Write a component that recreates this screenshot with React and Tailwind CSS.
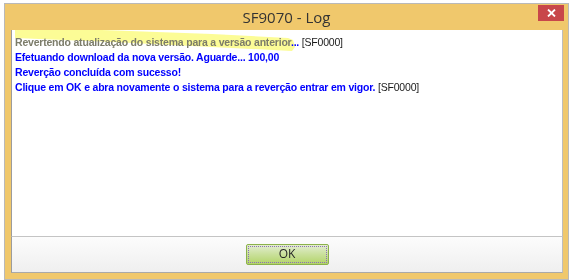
const lines = [
  { parts: [
    { t: "Revertendo atualização do sistema para a versão anterior", c: "text-[#7c7c6a]" },
    { t: "...", c: "text-[#0000ff]" },
    { t: " [SF0000]", c: "text-[#1a1a1a] font-normal" },
  ] },
  { parts: [{ t: "Efetuando download da nova versão. Aguarde... 100,00", c: "text-[#0000ff]" }] },
  { parts: [{ t: "Reverção concluída com sucesso!", c: "text-[#0000ff]" }] },
  { parts: [
    { t: "Clique em OK e abra novamente o sistema para a reverção entrar em vigor.", c: "text-[#0000ff]" },
    { t: " [SF0000]", c: "text-[#1a1a1a] font-normal" },
  ] },
];

export default function App() {
  return (
    <div className="w-[572px] h-[280px] bg-white pl-[4px] pt-[3px] overflow-hidden">
      <div className="w-[565px] h-[277px] border border-[#b9b9b9] bg-[#f0c86c] flex flex-col">
        {/* title bar */}
        <div className="relative h-[26px] shrink-0 flex items-center justify-center">
          <span className="text-[15px] text-[#333] font-['Open_Sans',sans-serif] leading-none mt-[1px]">SF9070 - Log</span>
          <div className="absolute right-[4px] top-[1px] w-[26px] h-[16px] bg-[#c8474a] flex items-center justify-center">
            <svg width="9" height="8" viewBox="0 0 9 8">
              <path d="M1 0.5 L8 7.5 M8 0.5 L1 7.5" stroke="white" strokeWidth="1.8" />
            </svg>
          </div>
        </div>

        {/* client */}
        <div className="ml-[6px] mr-[5px] h-[243px] flex flex-col bg-white">
          <div className="relative h-[207px] border-l border-r border-b border-l-[#9c9c9c] border-r-[#bdbdbd] border-b-[#c4c4c4] px-[3px] pt-[5px]">
            <svg className="absolute left-0 top-0 pointer-events-none mix-blend-multiply" width="300" height="60">
              <path d="M3 -2 L90 0 L200 4 L276 8 L281 10 L283 17 L280 21 L200 17 L100 12 L3 8 Z" fill="#fbfb6a" opacity="0.7" />
            </svg>
            <div className="relative font-['Liberation_Sans',sans-serif] text-[10.5px] tracking-[-0.2px] font-bold leading-[15px]">
              {lines.map((l, i) => (
                <div key={i} className="whitespace-pre">
                  {l.parts.map((p, j) => <span key={j} className={p.c}>{p.t}</span>)}
                </div>
              ))}
            </div>
          </div>
          <div className="h-[36px] bg-gradient-to-b from-[#fcfcfc] to-[#efefef] border-l border-r border-b border-l-[#9c9c9c] border-r-[#bdbdbd] border-b-[#a9a9a9] flex items-center justify-center">
            <button className="w-[83px] h-[21px] mt-[-1px] rounded-[2px] border border-[#8bb14b] bg-gradient-to-b from-[#e3edd0] via-[#c9e09a] to-[#b3d467] p-[1px]">
              <div className="w-full h-full border border-dotted border-[#8a6fb8] flex items-center justify-center text-[12px] text-[#262626] font-['Open_Sans',sans-serif] leading-none">
                OK
              </div>
            </button>
          </div>
        </div>
      </div>
    </div>
  );
}
